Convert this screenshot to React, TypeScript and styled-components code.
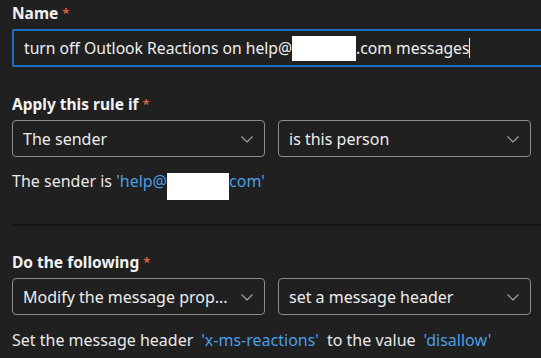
import styled, { createGlobalStyle } from 'styled-components';

const GlobalStyle = createGlobalStyle`
	html, body {
		margin: 0;
		padding: 0;
		background: #202020;
		overflow: hidden;
	}
	body {
		font-family: 'Noto Sans', 'Open Sans', sans-serif;
		color: #f0f0f0;
	}
`;

const Page = styled.div`
	width: 541px;
	height: 358px;
	padding: 2px 10px 0 12px;
	box-sizing: border-box;
	overflow: hidden;
`;

const Section = styled.div<{ $top?: number }>`
	display: flex;
	flex-direction: column;
	margin-top: ${(p) => p.$top ?? 0}px;
`;

const Label = styled.div`
	font-size: 15.5px;
	font-weight: 700;
	line-height: 22px;
	color: #f2f2f2;
	margin-bottom: 5px;
`;

const Required = styled.span`
	color: #e3643a;
	margin-left: 4px;
	font-weight: 600;
	font-size: 13px;
	vertical-align: top;
`;

const NameInput = styled.div`
	width: 560px;
	height: 38px;
	box-sizing: border-box;
	border: 2px solid #1a6fc0;
	border-radius: 2px;
	display: flex;
	align-items: center;
	padding-left: 10px;
	font-size: 15.7px;
	color: #efefef;
	white-space: nowrap;
`;

const Redacted = styled.span<{ $w: number; $h: number; $top?: number }>`
	display: inline-block;
	flex: none;
	width: ${(p) => p.$w}px;
	height: ${(p) => p.$h}px;
	margin-top: ${(p) => p.$top ?? 0}px;
	background: #ffffff;
`;

const Caret = styled.span`
	display: inline-block;
	width: 1px;
	height: 20px;
	background: #e8e8e8;
`;

const Row = styled.div`
	display: grid;
	grid-template-columns: 253px 253px;
	column-gap: 13px;
`;

const Select = styled.div`
	height: 37px;
	box-sizing: border-box;
	border: 1px solid #8c8c8c;
	border-radius: 4px;
	display: flex;
	align-items: center;
	justify-content: space-between;
	padding: 0 10px;
	font-size: 16px;
	color: #ededed;
`;

const Chevron = () => (
	<svg width="14" height="14" viewBox="0 0 14 14" fill="none">
		<path d="M1.5 4.5 L7 10 L12.5 4.5" stroke="#a8a8a8" strokeWidth="1.1" />
	</svg>
);

const Summary = styled.div<{ $top: number }>`
	margin-top: ${(p) => p.$top}px;
	font-size: 16px;
	line-height: 22px;
	color: #e8e8e8;
	white-space: nowrap;
	display: flex;
	align-items: flex-start;
`;

const Value = styled.span<{ $gap?: number }>`
	color: #4a9ee6;
	margin: 0 ${(p) => p.$gap ?? 0}px;
`;

const Divider = styled.div`
	height: 2px;
	background: #161616;
	margin: 24px -10px 25px 0;
`;

export default function App() {
	return (
		<Page>
			<GlobalStyle />
			<Section>
				<Label>
					Name<Required>*</Required>
				</Label>
				<NameInput>
					turn off Outlook Reactions on help@
					<Redacted $w={64} $h={25} />
					.com messages
					<Caret />
				</NameInput>
			</Section>
			<Section $top={26}>
				<Label>
					Apply this rule if<Required>*</Required>
				</Label>
				<Row>
					<Select>
						The sender
						<Chevron />
					</Select>
					<Select>
						is this person
						<Chevron />
					</Select>
				</Row>
				<Summary $top={13}>
					The sender is&nbsp;<Value>'help@</Value>
					<Redacted $w={62} $h={27} $top={3} />
					<Value>com'</Value>
				</Summary>
			</Section>
			<Divider />
			<Section>
				<Label>
					Do the following<Required>*</Required>
				</Label>
				<Row>
					<Select>
						Modify the message prop...
						<Chevron />
					</Select>
					<Select>
						set a message header
						<Chevron />
					</Select>
				</Row>
				<Summary $top={14}>
					Set the message header<Value $gap={8}>'x-ms-reactions'</Value>to the value
					<Value $gap={8}>'disallow'</Value>
				</Summary>
			</Section>
		</Page>
	);
}
